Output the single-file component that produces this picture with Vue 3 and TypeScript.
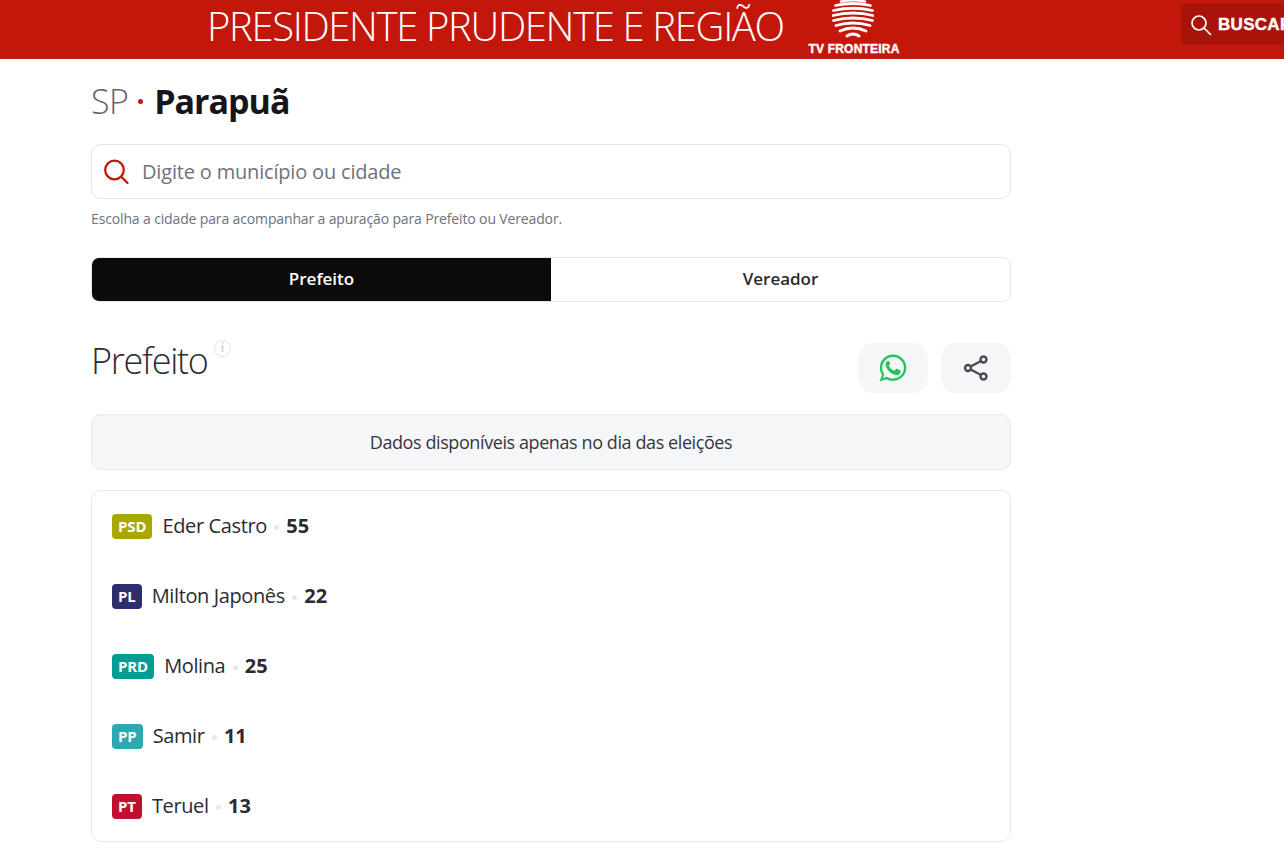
<script setup lang="ts">
interface Candidate { party: string; color: string; name: string; num: number }
const candidates: Candidate[] = [
  { party: 'PSD', color: '#a8a704', name: 'Eder Castro', num: 55 },
  { party: 'PL', color: '#2f2d6d', name: 'Milton Japonês', num: 22 },
  { party: 'PRD', color: '#009d94', name: 'Molina', num: 25 },
  { party: 'PP', color: '#2da9b1', name: 'Samir', num: 11 },
  { party: 'PT', color: '#c20f2f', name: 'Teruel', num: 13 },
]
</script>

<template>
  <div class="page">
    <header class="top">
      <div class="banner">PRESIDENTE PRUDENTE E REGIÃO</div>
      <div class="logo">
        <svg class="globe" width="42" height="38" viewBox="0 0 42 38" fill="none" stroke="#fff" stroke-linecap="round">
          <path d="M9 1.500Q21 -1 33 1.500" stroke-width="2.400" />
          <path d="M3.500 5.500Q21 1.500 38.500 5.500" stroke-width="2.800" />
          <path d="M1.500 10.500Q21 6 40.500 10.500" stroke-width="2.800" />
          <path d="M1 15.500Q21 10.500 41 15.500" stroke-width="2.800" />
          <path d="M1.500 20.500Q21 15.500 40.500 20.500" stroke-width="2.800" />
          <path d="M4 25.500Q21 20.500 38 25.500" stroke-width="2.800" />
          <path d="M8 31Q21 25 34 31" stroke-width="2.900" />
          <path d="M15 36Q21 32 27 36" stroke-width="3" />
        </svg>
        <div class="logo-text">TV FRONTEIRA</div>
      </div>
      <div class="search-btn">
        <svg width="22" height="22" viewBox="0 0 22 22" fill="none" stroke="#fff" stroke-width="1.700" stroke-linecap="round">
          <circle cx="9" cy="9" r="7" />
          <path d="M14 14l6.500 6.500" />
        </svg>
        <span>BUSCAR</span>
      </div>
    </header>

    <main class="main">
      <h1 class="title"><span class="uf">SP</span><i class="dot"></i><strong>Parapuã</strong></h1>

      <div class="search">
        <svg width="26" height="26" viewBox="0 0 26 26" fill="none" stroke="#c4170c" stroke-width="2.300" stroke-linecap="round">
          <circle cx="10.500" cy="11" r="9.300" />
          <path d="M17.500 18l6 6" />
        </svg>
        <span>Digite o município ou cidade</span>
      </div>
      <p class="help">Escolha a cidade para acompanhar a apuração para Prefeito ou Vereador.</p>

      <div class="tabs">
        <div class="tab active">Prefeito</div>
        <div class="tab">Vereador</div>
      </div>

      <div class="section-head">
        <div class="section-title">
          <h2>Prefeito</h2>
          <span class="info">i</span>
        </div>
        <div class="actions">
          <button class="act">
            <svg width="28" height="28" viewBox="0 0 28 28">
              <path fill="#25c35f" fill-rule="evenodd" d="M14.100 0.600C6.800 0.600 0.900 6.500 0.900 13.800c0 2.500.700 4.900 2 7L.600 27.400l6.800-2.200c2 1.100 4.300 1.700 6.700 1.700 7.300 0 13.200-5.900 13.200-13.100S21.400.600 14.100.600zm0 2.300c6 0 10.900 4.900 10.900 10.900s-4.900 10.800-10.900 10.800c-2.200 0-4.300-.600-6.100-1.800l-4 1.300 1.300-3.900c-1.300-1.800-2.100-4.100-2.100-6.400 0-6 4.900-10.900 10.900-10.900z" />
              <path fill="#25c35f" d="M10.300 7.600c-.300-.700-.600-.700-1-.700-1 0-2.700 1-2.700 3.300 0 3 2.300 5.800 3.300 6.900 1.800 2 4.700 4 7.600 4 2.200 0 3.900-1.400 4.100-2.900.100-.700.100-1.300 0-1.500-.100-.200-.400-.300-.800-.500l-2.900-1.400c-.400-.100-.700-.200-1 .200l-1.200 1.500c-.200.300-.500.300-.900.100-1.500-.600-3.600-2.200-4.900-4.600-.200-.400 0-.600.200-.800l.900-1.100c.200-.300.200-.500.100-.800z" />
            </svg>
          </button>
          <button class="act">
            <svg width="26" height="26" viewBox="0 0 26 26" fill="none" stroke="#4a4c52" stroke-width="2.400">
              <circle cx="20.500" cy="4.500" r="3" />
              <circle cx="5" cy="13" r="3" />
              <circle cx="20.500" cy="21.500" r="3" />
              <path d="M7.700 11.500L17.900 6M7.700 14.500l10.200 5.500" />
            </svg>
          </button>
        </div>
      </div>

      <div class="notice">Dados disponíveis apenas no dia das eleições</div>

      <section class="card">
        <div v-for="c in candidates" :key="c.name" class="row">
          <span class="badge" :style="{ background: c.color }">{{ c.party }}</span>
          <span class="name">{{ c.name }}</span>
          <i class="sep"></i>
          <b class="num">{{ c.num }}</b>
        </div>
      </section>
    </main>
  </div>
</template>

<style>
html, body { margin: 0; background: #fff; overflow: hidden; }
</style>

<style scoped>
.page {
  width: 1284px;
  height: 844px;
  overflow: hidden;
  font-family: "Open Sans", sans-serif;
  color: #2b2b30;
}
.top {
  height: 59px;
  background: #c4170c;
  display: flex;
  align-items: flex-start;
  color: #fff;
  white-space: nowrap;
}
.banner {
  margin-left: 207px;
  margin-top: -2px;
  width: 601px;
  flex: none;
  font-size: 40px;
  font-weight: 300;
  line-height: 56px;
  letter-spacing: -1.340px;
}
.logo {
  flex: none;
  width: 92px;
  display: flex;
  flex-direction: column;
  align-items: center;
}
.globe { display: block; margin-right: 2px; }
.logo-text {
  margin-top: 3px;
  font-family: "Liberation Sans", sans-serif;
  font-weight: 700;
  font-size: 12px;
  line-height: 16px;
  letter-spacing: 0.2px;
  -webkit-text-stroke: 0.4px #fff;
}
.search-btn {
  flex: none;
  margin-left: 281px;
  margin-top: 3px;
  width: 130px;
  height: 42px;
  box-sizing: border-box;
  background: #a81409;
  border-radius: 6px;
  display: flex;
  align-items: center;
  gap: 6px;
  padding-left: 9px;
  padding-top: 1px;
  font-family: "Liberation Sans", sans-serif;
  font-weight: 700;
  font-size: 17px;
  letter-spacing: 0.3px;
  -webkit-text-stroke: 0.4px #fff;
}
.main {
  width: 920px;
  margin-left: 91px;
}
.title {
  margin: 0;
  padding-top: 20px;
  height: 65px;
  box-sizing: border-box;
  display: flex;
  align-items: center;
  font-size: 34px;
  line-height: 45px;
  font-weight: 400;
}
.uf { font-weight: 300; color: #5f6672; letter-spacing: -0.600px; }
.dot {
  width: 5px;
  height: 5px;
  border-radius: 50%;
  background: #c4170c;
  margin: 0 11px 0 10px;
}
.title strong { font-weight: 700; color: #15151a; font-size: 34px; letter-spacing: -1px; }
.search {
  margin-top: 20px;
  height: 55px;
  box-sizing: border-box;
  border: 1px solid #e4e6eb;
  border-radius: 10px;
  display: flex;
  align-items: center;
  padding-left: 12px;
  gap: 12px;
  font-size: 20px;
  letter-spacing: -0.180px;
  color: #6f7278;
}
.help {
  margin: 11px 0 0;
  font-size: 14px;
  line-height: 18px;
  letter-spacing: -0.140px;
  color: #6b7280;
}
.tabs {
  margin-top: 29px;
  height: 45px;
  box-sizing: border-box;
  border: 1px solid #e7e8ec;
  border-radius: 8px;
  display: flex;
  overflow: hidden;
}
.tab {
  flex: 1;
  display: flex;
  align-items: center;
  justify-content: center;
  padding-bottom: 2px;
  font-size: 17px;
  font-weight: 600;
  color: #2b2b30;
}
.tab.active { background: #0b0b0c; color: #fff; }
.section-head {
  margin-top: 41px;
  height: 71px;
  display: flex;
  justify-content: space-between;
  align-items: flex-start;
}
.section-title { display: flex; align-items: flex-start; }
h2 {
  margin: 0;
  font-size: 36px;
  line-height: 36px;
  font-weight: 300;
  color: #2b2b30;
  letter-spacing: -1.250px;
}
.info {
  width: 17px;
  height: 17px;
  box-sizing: border-box;
  margin: -3px 0 0 6px;
  border: 1.500px solid #e0e2e8;
  border-radius: 50%;
  color: #d3d6de;
  font-size: 12px;
  line-height: 14px;
  text-align: center;
  font-weight: 700;
}
.actions { display: flex; gap: 13px; }
.act {
  width: 70px;
  height: 50px;
  padding: 0;
  border: 0;
  border-radius: 16px;
  background: #f5f6f8;
  display: flex;
  align-items: center;
  justify-content: center;
}
.notice {
  height: 56px;
  box-sizing: border-box;
  border: 1px solid #e8e9ed;
  border-radius: 10px;
  background: #f5f6f8;
  display: flex;
  align-items: center;
  justify-content: center;
  font-size: 18px;
  letter-spacing: -0.410px;
  color: #35363c;
}
.card {
  margin-top: 20px;
  height: 352px;
  box-sizing: border-box;
  border: 1px solid #e8e9ed;
  border-radius: 10px;
  padding: 0 20px;
}
.row {
  height: 70px;
  display: flex;
  align-items: center;
}
.badge {
  height: 25px;
  padding: 0 6px 1px;
  box-sizing: border-box;
  border-radius: 4px;
  display: flex;
  align-items: center;
  color: #fff;
  font-size: 15px;
  font-weight: 700;
  letter-spacing: -0.100px;
}
.name { margin: 0 0 2px 10px; font-size: 20px; letter-spacing: -0.380px; color: #2b2b30; }
.sep {
  width: 5px;
  height: 5px;
  border-radius: 50%;
  background: #e5e7eb;
  margin: 2px 7.200px 0;
}
.num { margin-bottom: 2px; font-size: 20px; font-weight: 700; color: #2b2b30; }
</style>
